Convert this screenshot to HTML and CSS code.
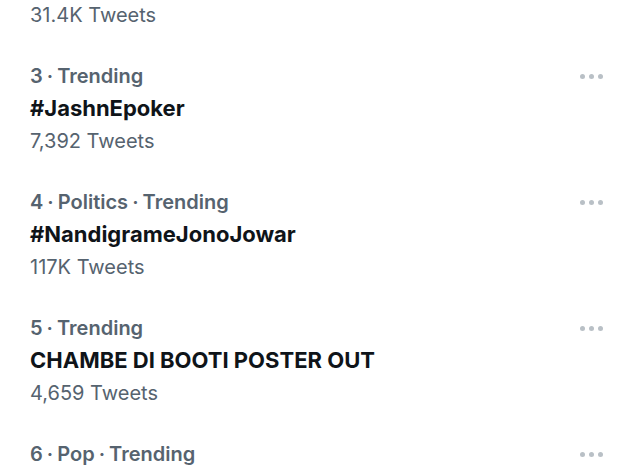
FILE: index.html
```html
<!DOCTYPE html>
<html lang="en">
<head>
    <meta charset="UTF-8">
    <meta name="viewport" content="width=device-width, initial-scale=1.0">
    <title>Trends</title>
    <link rel="stylesheet" href="styles.css">
</head>
<body>

<div class="trends">
    <div class="trend trend-cut">
        <div class="count">31.4K Tweets</div>
    </div>

    <div class="trend">
        <div class="meta">
            <span>3 · Trending</span>
            <span class="more"><i></i><i></i><i></i></span>
        </div>
        <div class="name">#JashnEpoker</div>
        <div class="count">7,392 Tweets</div>
    </div>

    <div class="trend">
        <div class="meta">
            <span>4 · Politics · Trending</span>
            <span class="more"><i></i><i></i><i></i></span>
        </div>
        <div class="name">#NandigrameJonoJowar</div>
        <div class="count">117K Tweets</div>
    </div>

    <div class="trend">
        <div class="meta">
            <span>5 · Trending</span>
            <span class="more"><i></i><i></i><i></i></span>
        </div>
        <div class="name">CHAMBE DI BOOTI POSTER OUT</div>
        <div class="count">4,659 Tweets</div>
    </div>

    <div class="trend">
        <div class="meta">
            <span>6 · Pop · Trending</span>
            <span class="more"><i></i><i></i><i></i></span>
        </div>
    </div>
</div>

</body>
</html>
```

FILE: styles.css
```css
body {
    font-family: Inter, "Noto Sans", sans-serif;
    margin: 0;
    padding: 0;
    background-color: #fff;
    overflow: hidden;
}
.trends {
    margin-top: -1px;
}
.trend {
    padding: 14px 18px 15px 30px;
}
.trend-cut {
    padding-top: 0;
}
.meta {
    display: flex;
    justify-content: space-between;
    align-items: center;
    height: 32px;
    font-size: 20px;
    font-weight: 600;
    word-spacing: -1px;
    color: #56636f;
}
.more {
    display: flex;
    gap: 4px;
}
.more i {
    width: 5px;
    height: 5px;
    border-radius: 50%;
    background: #b9c0c6;
}
.name {
    line-height: 33px;
    font-size: 22px;
    font-weight: 700;
    color: #0f1419;
}
.count {
    line-height: 32px;
    font-size: 20px;
    color: #56636f;
}
```
